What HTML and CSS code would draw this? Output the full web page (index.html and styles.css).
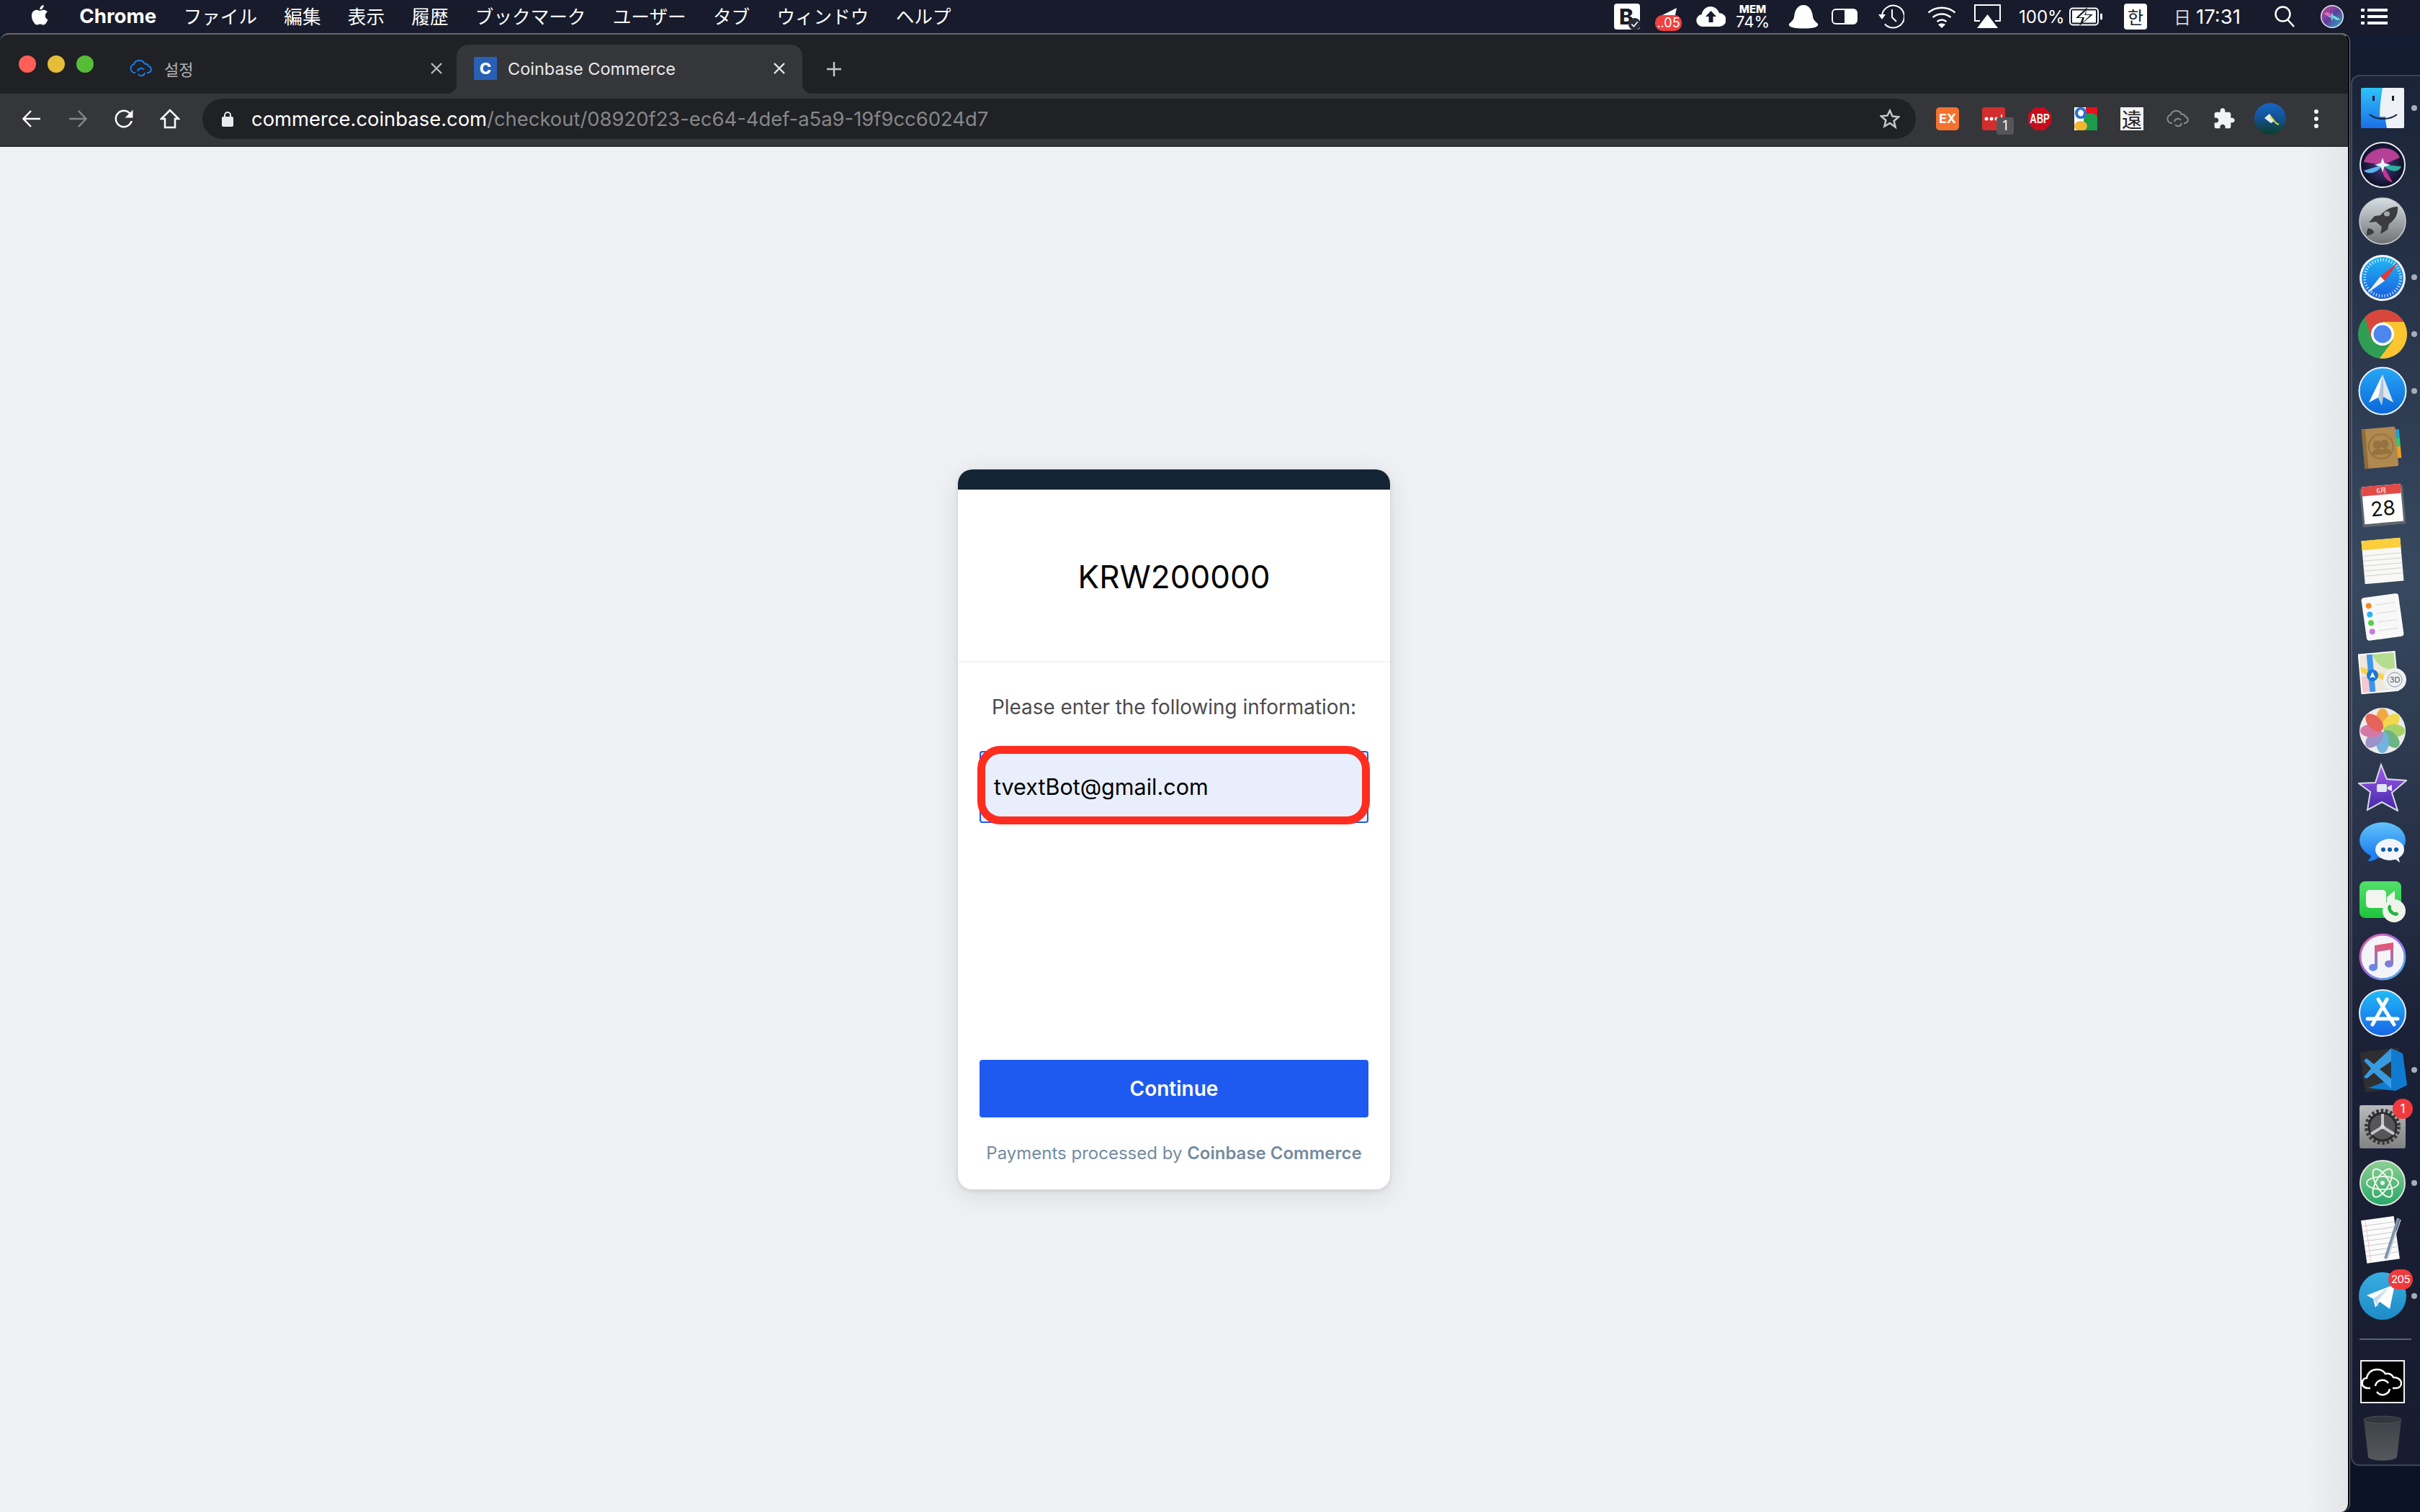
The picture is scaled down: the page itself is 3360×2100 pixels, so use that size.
FILE: index.html
```html
<!DOCTYPE html>
<html lang="en">
<head>
    <meta charset="UTF-8">
    <title>Coinbase Commerce</title>
    <link rel="stylesheet" href="styles.css">
</head>
<body>
    <!-- macOS menu bar -->
    <header class="menubar">
        <nav class="menu">
            <svg class="apple" viewBox="0 0 24 28"><path fill="#fff" d="M17.6 14.8c0-3 2.4-4.400 2.500-4.500-1.400-2-3.500-2.300-4.200-2.300-1.800-.2-3.500 1-4.400 1s-2.300-1-3.800-1c-1.900 0-3.700 1.100-4.700 2.800-2 3.500-.5 8.700 1.500 11.500 1 1.400 2.100 3 3.600 2.900 1.400-.1 2-.9 3.700-.9s2.200.9 3.700.9 2.500-1.400 3.500-2.800c1.100-1.600 1.500-3.200 1.600-3.300-.1 0-3-1.200-3-4.300zM14.700 6.100c.8-1 1.300-2.300 1.200-3.600-1.100 0-2.500.7-3.300 1.700-.7.800-1.300 2.200-1.200 3.500 1.300.1 2.500-.6 3.300-1.600z"/></svg>
            <span class="menu-app">Chrome</span>
            <span>ファイル</span>
            <span>編集</span>
            <span>表示</span>
            <span>履歴</span>
            <span>ブックマーク</span>
            <span>ユーザー</span>
            <span>タブ</span>
            <span>ウィンドウ</span>
            <span>ヘルプ</span>
        </nav>
        <div class="status">
            <div class="st-b"><span>B</span><svg viewBox="0 0 16 16"><circle cx="8" cy="8" r="8" fill="#2a2d38"/><path d="M4 8l3 3 5-6" fill="none" stroke="#fff" stroke-width="1.600"/></svg></div>
            <div class="st-cpu"><svg viewBox="0 0 37 32"><path fill="#fff" d="M6 12L30 0l-3 14z"/></svg><span>..05</span></div>
            <svg class="st-cloud" viewBox="0 0 41 28"><path fill="#fff" d="M9 28a8.500 8.500 0 0 1-1.500-16.900C9 4.600 14 0 20 0c5.500 0 10 3.500 12 9a9.500 9.500 0 0 1 0 19z"/><path fill="#171b2b" d="M20.500 6l7.500 8h-4.500v8h-6v-8H13z"/></svg>
            <div class="st-mem"><b>MEM</b><span>74%</span></div>
            <svg class="st-bell" viewBox="0 0 42 34"><path fill="#fff" d="M21 1c8 0 12 7 13 16 .5 5 4 7 7 10 1 2-1 4-4 5-10 2-22 2-32 0-3-1-5-3-4-5 3-3 6.500-5 7-10C9 8 13 1 21 1z"/></svg>
            <svg class="st-toggle" viewBox="0 0 36 22"><rect x="1" y="1" width="34" height="20" rx="5" fill="none" stroke="#fff" stroke-width="2"/><path fill="#fff" d="M18 1h12a5 5 0 0 1 5 5v10a5 5 0 0 1-5 5H18z"/></svg>
            <svg class="st-time" viewBox="0 0 36 36"><path fill="none" stroke="#fff" stroke-width="2" d="M5 18A15.500 15.500 0 1 1 9 28.500"/><path fill="#fff" d="M0 15h10l-5 7z"/><path fill="none" stroke="#fff" stroke-width="2" d="M19 8v11l6 6"/></svg>
            <svg class="st-wifi" viewBox="0 0 40 32"><g fill="none" stroke="#fff" stroke-width="2.500"><path d="M1.500 10.500C12 1.500 28 1.500 38.500 10.500"/><path d="M7.500 17C15 11 25 11 32.500 17"/><path d="M13.500 23c4-3 9-3 13 0"/></g><path fill="#fff" d="M20 32l-5-5c3-2 7-2 10 0z"/></svg>
            <svg class="st-airplay" viewBox="0 0 37 34"><path fill="none" stroke="#fff" stroke-width="2" d="M8 23H1V1h35v22h-7"/><path fill="#fff" d="M18.500 14L33 33H4z"/></svg>
            <span class="st-pct">100%</span>
            <svg class="st-batt" viewBox="0 0 46 26"><rect x="1" y="1.500" width="39" height="23" rx="4" fill="none" stroke="#fff" stroke-width="2"/><rect x="4" y="4.500" width="33" height="17" fill="#fff"/><path fill="#171b2b" d="M25 0L9 15h9l-4 11 19-16h-10z"/><path fill="#fff" d="M24 4L13 14h8l-2 7 10-10h-8z"/><rect x="43" y="8.500" width="3" height="9" rx="1.500" fill="#fff"/></svg>
            <span class="st-han">한</span>
            <span class="st-day">日</span>
            <span class="st-clock">17:31</span>
            <svg class="st-search" viewBox="0 0 28 30"><circle cx="11.500" cy="11.500" r="10" fill="none" stroke="#fff" stroke-width="2.500"/><path d="M18 19l9 10" stroke="#fff" stroke-width="2.500"/></svg>
            <svg class="st-siri" viewBox="0 0 32 32"><defs><linearGradient id="sg0" x1="0" y1="0" x2="1" y2="1"><stop offset="0" stop-color="#d0489c"/><stop offset=".5" stop-color="#5a3f9c"/><stop offset="1" stop-color="#2fb4c8"/></linearGradient></defs><circle cx="16" cy="16" r="16" fill="#e8e8ee"/><circle cx="16" cy="16" r="14.500" fill="url(#sg0)"/><path fill="#6fd0f0" d="M16 10l1.500 4.500 5 1.500-5 1.500L16 23l-1.500-5.500-5-1.500 5-1.500z"/><path fill="#e06ab8" d="M5 12c4-3 7-3 11 4-5 0-8-1-11-4z"/><path fill="#7ee0c0" d="M27 20c-4 2-7 1-11-4 5 0 8 1 11 4z"/></svg>
            <svg class="st-list" viewBox="0 0 37 24"><g fill="#fff"><rect y="1" width="5" height="4"/><rect y="10" width="5" height="4"/><rect y="19" width="5" height="4"/><rect x="9" y="1" width="28" height="4"/><rect x="9" y="10" width="28" height="4"/><rect x="9" y="19" width="28" height="4"/></g></svg>
        </div>
    </header>

    <div class="desktop">
        <main class="window">
            <div class="tabstrip">
                <div class="lights">
                    <span class="light red"></span>
                    <span class="light yellow"></span>
                    <span class="light green"></span>
                </div>
                <div class="tab">
                    <svg class="favicon" viewBox="0 0 32 24"><g fill="none" stroke="#1a7cf0" stroke-width="2"><path d="M8 18H7a6 6 0 0 1-1-11.800C7 3 10 1 13.500 1c3.200 0 6 1.800 7.200 4.500a5.600 5.600 0 0 1 5.500 3.500A4.600 4.600 0 0 1 26 18h-2"/><path d="M11 16a5 5 0 0 1 9-2M21 18a5 5 0 0 1-9 2"/></g></svg>
                    <span class="tab-title tab-title-ko">설정</span>
                    <svg class="tab-close" viewBox="0 0 16 16"><path d="M1 1l14 14M15 1L1 15" stroke="#b6b8bc" stroke-width="2.400"/></svg>
                </div>
                <div class="tab tab-active">
                    <div class="cb-favicon">C</div>
                    <span class="tab-title">Coinbase Commerce</span>
                    <svg class="tab-close" viewBox="0 0 16 16"><path d="M1 1l14 14M15 1L1 15" stroke="#e8eaed" stroke-width="2.400"/></svg>
                </div>
                <svg class="new-tab" viewBox="0 0 24 24"><path d="M12 2v20M2 12h20" stroke="#c4c7cc" stroke-width="2.500"/></svg>
            </div>

            <div class="toolbar">
                <div class="nav-btn"><svg viewBox="0 0 28 28"><path d="M26 14H3M13 3L2.500 14 13 25" fill="none" stroke="#fff" stroke-width="2.500"/></svg></div>
                <div class="nav-btn"><svg viewBox="0 0 28 28"><path d="M2 14h23M15 3l10.500 11L15 25" fill="none" stroke="#85878a" stroke-width="2.500"/></svg></div>
                <div class="nav-btn"><svg viewBox="3 3 18 18"><path fill="#fff" d="M17.650 6.350C16.200 4.900 14.210 4 12 4c-4.420 0-7.990 3.580-7.990 8s3.570 8 7.990 8c3.730 0 6.840-2.550 7.730-6h-1.680c-.82 2.330-3.040 4.400-6.050 4.400-3.510 0-6.400-2.890-6.400-6.400s2.890-6.400 6.400-6.400c1.760 0 3.340.69 4.520 1.880L13 11h7V4l-2.350 2.350z"/></svg></div>
                <div class="nav-btn"><svg viewBox="0 0 28 28"><path d="M14 2L2 14h5v12h14V14h5z" fill="none" stroke="#fff" stroke-width="2.500"/></svg></div>
                <div class="address">
                    <svg class="lock" viewBox="0 0 16 22"><path d="M4 9V6a4 4 0 0 1 8 0v3" fill="none" stroke="#e8eaed" stroke-width="2"/><rect y="8" width="16" height="14" rx="2" fill="#e8eaed"/></svg>
                    <span class="url"><span class="url-host">commerce.coinbase.com</span>/checkout/08920f23-ec64-4def-a5a9-19f9cc6024d7</span>
                    <svg class="star" viewBox="0 0 28 28"><path d="M14 2.500l3.500 8 8.700.8-6.600 5.700 2 8.500L14 20l-7.600 4.500 2-8.500-6.600-5.700 8.700-.8z" fill="none" stroke="#c4c7cc" stroke-width="2.500"/></svg>
                </div>
                <div class="exts">
                    <div class="ext"><div class="ext-ex">EX</div></div>
                    <div class="ext">
                        <svg class="ext-img" viewBox="0 0 32 32"><rect width="32" height="32" rx="3" fill="#d32d2d"/><g fill="#fff"><circle cx="6" cy="16" r="2.500"/><circle cx="13" cy="16" r="2.500"/><circle cx="20" cy="16" r="2.500"/><rect x="26" y="10" width="2" height="12"/></g></svg>
                        <span class="ext-badge">1</span>
                    </div>
                    <div class="ext">
                        <div class="ext-abp"><span>ABP</span></div>
                    </div>
                    <div class="ext">
                        <svg class="ext-img" viewBox="0 0 32 32"><rect width="32" height="32" fill="#fff"/><path fill="#e8101c" d="M16 0h16v14H16z"/><path fill="#1d9a4c" d="M32 32H13V17c0-6 5-9 10-9 4 0 7 2 9 5z"/><ellipse cx="9" cy="8" rx="7.500" ry="8" fill="#fff"/><path fill="#2a6fd6" d="M9 0c5 0 8 3.500 8 8s-3 8-8 8-8-3.500-8-8 3-8 8-8zm0 3.500C7 3.500 5 5.500 5 8s2 4.500 4 4.500 4-2 4-4.500-2-4.500-4-4.500z"/><ellipse cx="9" cy="26" rx="9" ry="7" fill="#f2b731"/></svg>
                    </div>
                    <div class="ext"><div class="ext-kanji">遠</div></div>
                    <div class="ext">
                        <svg class="ext-img" viewBox="0 0 32 24"><g fill="none" stroke="#8a8c90" stroke-width="2"><path d="M8 18H7a6 6 0 0 1-1-11.800C7 3 10 1 13.500 1c3.200 0 6 1.800 7.200 4.500a5.600 5.600 0 0 1 5.500 3.500A4.600 4.600 0 0 1 26 18h-2"/><path d="M11 16a5 5 0 0 1 9-2M21 18a5 5 0 0 1-9 2"/></g></svg>
                    </div>
                    <div class="ext">
                        <svg class="ext-puzzle" viewBox="0 0 24 24"><path fill="#f1f3f4" d="M20.500 11H19V7c0-1.100-.9-2-2-2h-4V3.500C13 2.120 11.880 1 10.500 1S8 2.120 8 3.500V5H4c-1.100 0-1.990.9-1.990 2v3.800H3.500c1.490 0 2.700 1.210 2.700 2.700s-1.210 2.700-2.700 2.700H2V20c0 1.100.9 2 2 2h3.800v-1.500c0-1.490 1.210-2.700 2.700-2.700 1.490 0 2.700 1.210 2.700 2.700V22H17c1.100 0 2-.9 2-2v-4h1.500c1.380 0 2.500-1.120 2.500-2.500S21.880 11 20.500 11z"/></svg>
                    </div>
                    <div class="ext">
                        <svg class="ext-avatar" viewBox="0 0 44 44"><defs><linearGradient id="av" x1="0" y1="0" x2="0" y2="1"><stop offset="0" stop-color="#1566c8"/><stop offset=".5" stop-color="#13508f"/><stop offset="1" stop-color="#0c3d24"/></linearGradient></defs><circle cx="22" cy="22" r="22" fill="url(#av)"/><path fill="#e6ecf2" d="M14 21l7-6 7 10-5 3z"/><path d="M22 18l8 10 4 2" stroke="#e4d92a" stroke-width="2" fill="none"/></svg>
                    </div>
                    <div class="ext">
                        <div class="ext-menu"><i></i><i></i><i></i></div>
                    </div>
                </div>
            </div>

            <div class="page">
                <section class="card">
                    <div class="card-top"></div>
                    <div class="card-head"><span>KRW200000</span></div>
                    <div class="card-body">
                        <p class="prompt">Please enter the following information:</p>
                        <div class="input">
                            <span>tvextBot@gmail.com</span>
                            <div class="mark"></div>
                        </div>
                        <button class="continue">Continue</button>
                        <p class="processed">Payments processed by <b>Coinbase Commerce</b></p>
                    </div>
                </section>
            </div>
        </main>

        <aside class="dock">
            <!-- finder -->
            <div class="dock-item run">
                <svg viewBox="0 0 68 68"><defs><linearGradient id="fi1" x1="0" y1="0" x2="0" y2="1"><stop offset="0" stop-color="#2ec4fa"/><stop offset="1" stop-color="#1b6fe8"/></linearGradient></defs><rect x="4" y="6" width="60" height="56" rx="2" fill="url(#fi1)"/><path fill="#eef2f6" d="M34 6h28a2 2 0 0 1 2 2v52a2 2 0 0 1-2 2H40c-1-5-2-10-2-16h-8c0-14 2-28 4-40z"/><g fill="#142036"><rect x="20" y="17" width="3" height="7"/><rect x="47" y="17" width="3" height="7"/></g><path d="M16 43c10 8 28 8 38 0" fill="none" stroke="#142036" stroke-width="2"/></svg>
            </div>
            <!-- siri -->
            <div class="dock-item">
                <svg viewBox="0 0 68 68"><defs><radialGradient id="si1"><stop offset="0" stop-color="#4a3a86"/><stop offset="1" stop-color="#0c0f24"/></radialGradient></defs><circle cx="34" cy="34" r="31" fill="url(#si1)" stroke="#e8e8ee" stroke-width="2"/><path fill="#c4449c" opacity=".9" d="M8 30C14 8 50 4 58 24L34 34z"/><path fill="#2fc8a8" opacity=".85" d="M34 34l26 2c-4 10-16 8-26-2z"/><path fill="#d03a94" opacity=".9" d="M34 34l14 24c-9-1-17-12-14-24z"/><path fill="#5ec4ff" opacity=".9" d="M34 34L8 42c6 6 19 4 26-8z"/><path fill="#e8f8ff" d="M34 24l2.500 7.500 8.500 2.500-8.500 2.500L34 44l-2.500-7.500L23 34l8.500-2.500z"/></svg>
            </div>
            <!-- launchpad -->
            <div class="dock-item">
                <svg viewBox="0 0 68 68"><defs><linearGradient id="lp1" x1="0" y1="0" x2="0" y2="1"><stop offset="0" stop-color="#d7dfe4"/><stop offset="1" stop-color="#6f7073"/></linearGradient></defs><circle cx="34" cy="34" r="32" fill="url(#lp1)" stroke="#c8ccd0" stroke-width="1.500"/><path fill="#3c3c3f" d="M55 14c1 9-3 18-12 24l-2 8-10 6 2-10-8-7-10 1 8-9 8-1c7-8 15-12 24-12z"/><path fill="#3c3c3f" d="M14 44c4 0 8 3 8 6-3 3-8 4-10 4 0-3 0-7 2-10z"/><ellipse cx="40" cy="24" rx="4" ry="3.500" fill="#a4a8ac"/></svg>
            </div>
            <!-- safari -->
            <div class="dock-item run">
                <svg viewBox="0 0 68 68"><defs><linearGradient id="sa1" x1="0" y1="0" x2="0" y2="1"><stop offset="0" stop-color="#1fb8f4"/><stop offset="1" stop-color="#1a5ee0"/></linearGradient></defs><circle cx="34" cy="34" r="32" fill="#f3f4f6"/><circle cx="34" cy="34" r="29" fill="url(#sa1)"/><circle cx="34" cy="34" r="25" fill="none" stroke="#fff" stroke-width="4" stroke-dasharray="1 2.930"/><path fill="#f0342c" d="M56 12L37 38l-6-6z"/><path fill="#f0f0f0" d="M12 56l19-24 6 6z"/></svg>
            </div>
            <!-- chrome -->
            <div class="dock-item run">
                <svg viewBox="0 0 68 68"><circle cx="34" cy="34" r="34" fill="#2f9e54"/><path fill="#d9473c" d="M9.600 10.300A34 34 0 0 1 63.400 17H34L19.300 42.500z"/><path fill="#fbc52f" d="M34 17h29.400A34 34 0 0 1 30 67.800L48.700 42.500z"/><circle cx="34" cy="34" r="16" fill="#fff"/><circle cx="34" cy="34" r="12.500" fill="#4d86ee"/></svg>
            </div>
            <!-- spark -->
            <div class="dock-item run">
                <svg viewBox="0 0 68 68"><defs><linearGradient id="sp1" x1="0" y1="0" x2="0" y2="1"><stop offset="0" stop-color="#27a8f8"/><stop offset="1" stop-color="#0a66d8"/></linearGradient></defs><circle cx="34" cy="34" r="32.500" fill="url(#sp1)" stroke="#eef3f8" stroke-width="2"/><path fill="#dbe6f2" d="M34 11L49 50l-14-8z"/><path fill="#fff" d="M34 11L15 50l13-7 5 11z"/><path fill="#b6c6d8" d="M34 11l1 31-2 12-5-11z"/></svg>
            </div>
            <!-- contacts -->
            <div class="dock-item">
                <svg viewBox="0 0 68 68"><g transform="rotate(-5 34 34)"><path fill="#22a0ce" d="M53 10h6v12h-6z"/><path fill="#2cc87c" d="M53 22h6v12h-6z"/><path fill="#f0a020" d="M53 34h6v16h-6z"/><path fill="#b08850" d="M7 6h44a3 3 0 0 1 3 3v50a2 2 0 0 1-2 2H7z"/><rect x="7" y="6" width="5" height="55" fill="#8e6c3c"/><circle cx="32" cy="32" r="17" fill="none" stroke="#957340" stroke-width="2"/><circle cx="27" cy="29" r="6" fill="#957340"/><circle cx="37" cy="29" r="6" fill="#957340"/><path fill="#957340" d="M17 43c2-6 6-8 10-8s8 2 10 8zM29 43c2-6 5-8 9-8s7 2 8 8z"/></g></svg>
            </div>
            <!-- calendar -->
            <div class="dock-item">
                <svg viewBox="0 0 68 68"><g transform="rotate(-5 34 34)"><rect x="4" y="10" width="60" height="54" fill="#5e666e"/><rect x="7" y="8" width="54" height="52" fill="#fff"/><rect x="7" y="8" width="54" height="13" fill="#e34a46"/><text x="34" y="18.500" class="cal-month">6月</text><text x="34" y="50" class="cal-day">28</text></g></svg>
            </div>
            <!-- notes -->
            <div class="dock-item">
                <svg viewBox="0 0 68 68"><g transform="rotate(-5 34 34)"><rect x="7" y="4" width="54" height="60" fill="#f8f8f6"/><rect x="7" y="4" width="54" height="13" fill="#fbcf3c"/><path stroke="#d0d0cc" stroke-width="1" d="M7 25h54M7 32h54M7 39h54M7 46h54M7 53h54"/></g></svg>
            </div>
            <!-- reminders -->
            <div class="dock-item">
                <svg viewBox="0 0 68 68"><g transform="rotate(-8 34 34)"><rect x="8" y="4" width="52" height="60" rx="4" fill="#f8f8f8"/><circle cx="17" cy="16" r="4" fill="#f58a2a"/><circle cx="17" cy="28" r="4" fill="#2fb0f5"/><circle cx="17" cy="40" r="4" fill="#54d044"/><circle cx="17" cy="52" r="4" fill="#c87ae0"/><path stroke="#d8d8d8" d="M26 16h28M26 28h28M26 40h28M26 52h28"/></g></svg>
            </div>
            <!-- maps -->
            <div class="dock-item">
                <svg viewBox="0 0 68 68"><g transform="rotate(-5 30 32)"><rect x="2" y="4" width="52" height="56" fill="#fff"/><rect x="4" y="6" width="48" height="52" fill="#ece8dc"/><path fill="#b6dc90" d="M22 6h30v24c-12 0-26-8-30-24z"/><path fill="#f6c8d4" d="M4 36h10v22H4z"/><path fill="#fbd24e" d="M4 22l48 20v8L4 30z"/><path fill="#3d96ea" d="M14 6h8v52h-8z"/></g><circle cx="20" cy="36" r="8" fill="#1777d8"/><path fill="#fff" d="M20 31l4 9-4-2-4 2z"/><circle cx="51" cy="42" r="16" fill="#eef0f2"/><circle cx="51" cy="42" r="10" fill="none" stroke="#8a96a4"/><text x="51" y="46" class="maps-3d">3D</text></svg>
            </div>
            <!-- photos -->
            <div class="dock-item">
                <svg viewBox="0 0 68 68"><circle cx="34" cy="34" r="32" fill="#ecebea"/><g opacity=".82"><ellipse cx="34" cy="18" rx="9" ry="15" fill="#f59a22"/><ellipse cx="34" cy="18" rx="9" ry="15" fill="#f4d52a" transform="rotate(45 34 34)"/><ellipse cx="34" cy="18" rx="9" ry="15" fill="#96cc4a" transform="rotate(90 34 34)"/><ellipse cx="34" cy="18" rx="9" ry="15" fill="#4fa86e" transform="rotate(135 34 34)"/><ellipse cx="34" cy="18" rx="9" ry="15" fill="#5aa7dc" transform="rotate(180 34 34)"/><ellipse cx="34" cy="18" rx="9" ry="15" fill="#8c7fc0" transform="rotate(225 34 34)"/><ellipse cx="34" cy="18" rx="9" ry="15" fill="#cf5f94" transform="rotate(270 34 34)"/><ellipse cx="34" cy="18" rx="9" ry="15" fill="#e4463c" transform="rotate(315 34 34)"/></g><circle cx="34" cy="34" r="1.500" fill="#fff"/></svg>
            </div>
            <!-- imovie -->
            <div class="dock-item">
                <svg viewBox="0 0 68 68"><defs><linearGradient id="im1" x1="0" y1="0" x2="0" y2="1"><stop offset="0" stop-color="#a45cf2"/><stop offset="1" stop-color="#4226a8"/></linearGradient></defs><path fill="url(#im1)" stroke="#d8dce2" stroke-width="2" d="M32 3l8 20 27 2-20 17 8 25-22-12-20 11 4-25L1 29l23-1z"/><rect x="26" y="30" width="14" height="11" rx="2" fill="#dfe6f4"/><path fill="#dfe6f4" d="M41 34l6-3v9l-6-3z"/></svg>
            </div>
            <!-- messages -->
            <div class="dock-item">
                <svg viewBox="0 0 68 68"><defs><linearGradient id="ms1" x1="0" y1="0" x2="0" y2="1"><stop offset="0" stop-color="#62c3fb"/><stop offset="1" stop-color="#1878ef"/></linearGradient></defs><ellipse cx="34" cy="29" rx="32" ry="25" fill="url(#ms1)"/><path fill="#1f80f0" d="M18 48c0 5-2 8-5 10 6 0 12-2 16-6z"/><ellipse cx="44" cy="42" rx="20" ry="15" fill="#f2f6fb"/><path fill="#f2f6fb" d="M50 54l8 6-2-8z"/><g fill="#0f5aa8"><circle cx="35" cy="42" r="3"/><circle cx="44" cy="42" r="3"/><circle cx="53" cy="42" r="3"/></g></svg>
            </div>
            <!-- facetime -->
            <div class="dock-item">
                <svg viewBox="0 0 68 68"><defs><linearGradient id="ft1" x1="0" y1="0" x2="0" y2="1"><stop offset="0" stop-color="#52e06a"/><stop offset="1" stop-color="#1ec53e"/></linearGradient></defs><rect x="2" y="8" width="58" height="51" rx="8" fill="url(#ft1)"/><rect x="11" y="20" width="28" height="25" rx="5" fill="#f2f4ef"/><path fill="#f2f4ef" d="M40 30l11-9v22l-11-7z"/><ellipse cx="50" cy="49" rx="16" ry="16" fill="#eef4ea"/><path fill="#22b540" d="M43 41c2-1 4 3 3 4-1 2 4 7 6 6 1-1 5 1 4 3-2 3-6 2-9 0-5-3-8-10-4-13z"/></svg>
            </div>
            <!-- music -->
            <div class="dock-item">
                <svg viewBox="0 0 68 68"><defs><linearGradient id="mu1" x1="0" y1="0" x2="1" y2="1"><stop offset="0" stop-color="#e85f90"/><stop offset=".5" stop-color="#9c6ae4"/><stop offset="1" stop-color="#38c4f0"/></linearGradient><linearGradient id="mu2" x1="0" y1="0" x2="0" y2="1"><stop offset="0" stop-color="#f2506a"/><stop offset="1" stop-color="#5a90f4"/></linearGradient></defs><circle cx="34" cy="34" r="31" fill="#f4f4f8" stroke="url(#mu1)" stroke-width="3"/><path fill="url(#mu2)" d="M23 18l26-4v30a6 5 0 1 1-4-5V24l-18 3v22a6 5 0 1 1-4-5z"/></svg>
            </div>
            <!-- app store -->
            <div class="dock-item">
                <svg viewBox="0 0 68 68"><defs><linearGradient id="as1" x1="0" y1="0" x2="0" y2="1"><stop offset="0" stop-color="#20bcf8"/><stop offset="1" stop-color="#1864e8"/></linearGradient></defs><circle cx="34" cy="34" r="32" fill="url(#as1)" stroke="#eef0f4" stroke-width="2"/><path stroke="#fff" stroke-width="5" stroke-linecap="round" fill="none" d="M40 15L20 50M28 15l22 35M13 42h42"/></svg>
            </div>
            <!-- vscode -->
            <div class="dock-item run">
                <svg viewBox="0 0 68 68"><path fill="#2f2f31" transform="rotate(-7 34 34)" d="M6 6h54v56H6z"/><path fill="#0f7bd0" d="M46 4l16 7 6 44-16 8-38-4 32-12z"/><path fill="#3aa0ea" d="M46 4l-24 22-10-8-4 3 10 11-10 12 4 2 10-8 24 22z" opacity=".95"/><path fill="#2f2f31" d="M46 22L30 33l16 13z"/></svg>
            </div>
            <!-- system preferences -->
            <div class="dock-item">
                <svg viewBox="0 0 68 68"><defs><linearGradient id="pr1" x1="0" y1="0" x2="0" y2="1"><stop offset="0" stop-color="#b8babc"/><stop offset="1" stop-color="#808284"/></linearGradient></defs><rect x="2" y="4" width="64" height="60" rx="3" fill="url(#pr1)"/><circle cx="34" cy="34" r="21" fill="none" stroke="#3c3c3e" stroke-width="8" stroke-dasharray="3.500 2.500"/><circle cx="34" cy="34" r="19" fill="#565658" stroke="#2b2b2d" stroke-width="3"/><path stroke="#c4c4c6" stroke-width="4" d="M34 34V16M34 34L18 44M34 34l16 10"/><circle cx="34" cy="34" r="3" fill="#dcdcde"/></svg>
                <span class="dock-badge dock-badge-one">1</span>
            </div>
            <!-- atom -->
            <div class="dock-item run">
                <svg viewBox="0 0 68 68"><defs><linearGradient id="at1" x1="0" y1="0" x2="0" y2="1"><stop offset="0" stop-color="#8fcf93"/><stop offset="1" stop-color="#27a868"/></linearGradient></defs><circle cx="34" cy="34" r="31" fill="url(#at1)" stroke="#dfe4dc" stroke-width="2"/><g fill="none" stroke="#eef6ea" stroke-width="2"><ellipse cx="34" cy="34" rx="22" ry="9"/><ellipse cx="34" cy="34" rx="22" ry="9" transform="rotate(60 34 34)"/><ellipse cx="34" cy="34" rx="22" ry="9" transform="rotate(120 34 34)"/></g><circle cx="34" cy="34" r="3" fill="#eef6ea"/></svg>
            </div>
            <!-- textedit -->
            <div class="dock-item">
                <svg viewBox="0 0 68 68"><g transform="rotate(-8 30 34)"><rect x="8" y="4" width="46" height="60" fill="#fbfbfb"/><path stroke="#c8c8cc" d="M8 12h46M8 19h46M8 26h46M8 33h46M8 40h46M8 47h46M8 54h46"/><path stroke="#f4c4c4" d="M14 4v60"/></g><path stroke="#7f93ab" stroke-width="4" d="M38 60l18-56"/><path stroke="#c8d4e0" stroke-width="1.500" d="M41 60l18-54"/></svg>
            </div>
            <!-- telegram -->
            <div class="dock-item run">
                <svg viewBox="0 0 68 68"><defs><linearGradient id="tg1" x1="0" y1="0" x2="0" y2="1"><stop offset="0" stop-color="#37aee2"/><stop offset="1" stop-color="#1e8bc6"/></linearGradient></defs><circle cx="34" cy="34" r="33" fill="url(#tg1)"/><path fill="#fff" d="M12 33l39-15-7 34-14-10-6 8-3-12z"/><path fill="#c8dcec" d="M21 38l23-17-17 20 1 8z"/></svg>
                <span class="dock-badge dock-badge-num">205</span>
            </div>
            <div class="dock-sep"><hr></div>
            <!-- cloud sync -->
            <div class="dock-item">
                <svg viewBox="0 0 68 68"><rect x="4" y="5" width="60" height="58" fill="#000" stroke="#f4f4f4" stroke-width="2"/><path fill="none" stroke="#fff" stroke-width="2.500" d="M17 43h-3c-7 0-9-5-8-8 0-4 3-6 6-6 1-7 7-12 14-12 6 0 10 3 12 6 5-1 9 1 11 5 7 0 11 4 11 8 0 4-3 7-8 7h-4"/><path fill="none" stroke="#fff" stroke-width="2.500" d="M24 40a10 10 0 0 1 18-4M44 44a10 10 0 0 1-18 4"/></svg>
            </div>
            <!-- trash -->
            <div class="dock-item">
                <svg viewBox="0 0 68 68"><defs><linearGradient id="tr1" x1="0" y1="0" x2="0" y2="1"><stop offset="0" stop-color="#3d4248"/><stop offset="1" stop-color="#54585c"/></linearGradient></defs><path fill="url(#tr1)" d="M8 8h52l-6 52c-5 6-35 6-40 0z"/><ellipse cx="34" cy="8" rx="26" ry="5" fill="#33373b" stroke="#4e5257"/></svg>
            </div>
        </aside>
    </div>
</body>
</html>
```
FILE: styles.css
```css
* {
    box-sizing: border-box;
    margin: 0;
    padding: 0;
}

html, body {
    width: 3360px;
    height: 2100px;
    overflow: hidden;
}

body {
    font-family: Inter, 'Liberation Sans', sans-serif;
    background: linear-gradient(180deg, #131b30 0%, #101a33 60%, #0b1226 100%);
    color: #fff;
}

/* menu bar */
.menubar {
    height: 46px;
    background: #171b2b;
    display: flex;
    justify-content: space-between;
    align-items: center;
    padding-right: 45px;
}

.menu {
    display: flex;
    align-items: center;
    gap: 37.300px;
    padding: 0 0 2px 41px;
    font-family: 'Noto Sans CJK JP', sans-serif;
    font-size: 25.600px;
    line-height: 44px;
}

.apple {
    width: 30px;
    height: 34px;
    margin: -2px 2px 0 0;
}

.menu-app {
    font-family: Inter, sans-serif;
    font-weight: 700;
    font-size: 27.700px;
}

.status {
    display: flex;
    align-items: center;
    font-size: 24px;
    height: 46px;
}

.st-b {
    width: 36px;
    height: 36px;
    background: #fff;
    border-radius: 4px;
    position: relative;
    color: #171b2b;
    font-weight: 800;
    font-size: 30px;
    line-height: 36px;
    padding-left: 7px;
}

.st-b svg {
    position: absolute;
    right: -1px;
    bottom: -1px;
    width: 17px;
    height: 17px;
}

.st-cpu {
    width: 37px;
    height: 32px;
    margin-left: 21px;
    margin-top: 8px;
    position: relative;
}

.st-cpu svg {
    display: block;
    width: 37px;
    height: 32px;
}

.st-cpu span {
    position: absolute;
    left: 0;
    bottom: 0;
    width: 37px;
    height: 22px;
    background: #f04040;
    border-radius: 10px;
    font-size: 18px;
    line-height: 22px;
    text-align: center;
}

.st-cloud {
    width: 41px;
    height: 28px;
    margin-left: 20px;
}

.st-mem {
    width: 49px;
    margin-left: 13px;
    display: flex;
    flex-direction: column;
    align-items: center;
}

.st-mem b {
    font-size: 15px;
    line-height: 14px;
    font-weight: 800;
}

.st-mem span {
    font-size: 22px;
    line-height: 20px;
}

.st-bell {
    width: 42px;
    height: 34px;
    margin-left: 25px;
}

.st-toggle {
    width: 36px;
    height: 22px;
    margin-left: 18px;
}

.st-time {
    width: 36px;
    height: 36px;
    margin-left: 29px;
}

.st-wifi {
    width: 40px;
    height: 32px;
    margin-left: 32px;
}

.st-airplay {
    width: 37px;
    height: 34px;
    margin-left: 25px;
}

.st-pct {
    width: 60px;
    margin-left: 25px;
    white-space: nowrap;
    font-size: 24px;
}

.st-batt {
    width: 46px;
    height: 26px;
    margin-left: 10px;
}

.st-han {
    width: 32px;
    height: 36px;
    margin-left: 30px;
    background: #fff;
    border-radius: 4px;
    color: #171b2b;
    font-family: 'Noto Sans CJK KR', sans-serif;
    font-size: 24px;
    line-height: 36px;
    text-align: center;
}

.st-day {
    width: 20px;
    margin-left: 37px;
    font-family: 'Noto Sans CJK JP', sans-serif;
    font-size: 24px;
    line-height: 36px;
    color: #d8d8d8;
}

.st-clock {
    width: 63px;
    margin-left: 11px;
    font-size: 27.500px;
    white-space: nowrap;
}

.st-search {
    width: 28px;
    height: 30px;
    margin-left: 46px;
}

.st-siri {
    width: 32px;
    height: 32px;
    margin-left: 36px;
}

.st-list {
    width: 37px;
    height: 24px;
    margin-left: 24px;
}

/* desktop */
.desktop {
    display: flex;
    height: 2054px;
}

.window {
    width: 3262px;
    height: 2054px;
    display: flex;
    flex-direction: column;
    flex-shrink: 0;
    background: #202124;
    border-top: 2px solid #66686c;
    border-right: 2px solid #000;
    border-radius: 12px 12px 12px 0;
    box-shadow: 1px 0 0 #7c8088;
    overflow: hidden;
}

.tabstrip {
    height: 82px;
    display: flex;
    align-items: flex-end;
    flex-shrink: 0;
}

.lights {
    width: 164px;
    height: 82px;
    padding: 29px 0 0 26px;
    display: flex;
    gap: 16px;
}

.light {
    width: 24px;
    height: 24px;
    border-radius: 50%;
}

.red { background: #ff5f57; }
.yellow { background: #e5bd39; }
.green { background: #57bd39; }

.tab {
    width: 458px;
    height: 68px;
    display: flex;
    align-items: center;
    padding: 0 8px 2px 16px;
    position: relative;
}

.tab-active {
    width: 480px;
    margin-left: 12px;
    padding: 0 24px 2px 24px;
    background: #35363a;
    border-radius: 16px 16px 0 0;
}

.tab-active::before,
.tab-active::after {
    content: '';
    position: absolute;
    bottom: 0;
    width: 14px;
    height: 14px;
}

.tab-active::before {
    left: -14px;
    background: radial-gradient(circle at 0 0, transparent 14px, #35363a 14.500px);
}

.tab-active::after {
    right: -14px;
    background: radial-gradient(circle at 100% 0, transparent 14px, #35363a 14.500px);
}

.favicon {
    width: 32px;
    height: 24px;
}

.cb-favicon {
    width: 32px;
    height: 32px;
    background: #2760b4;
    color: #fff;
    font-weight: 800;
    font-size: 22px;
    line-height: 32px;
    text-align: center;
}

.tab-title {
    flex: 1;
    margin-left: 15px;
    font-size: 23.500px;
    color: #e8eaed;
    white-space: nowrap;
}

.tab-title-ko {
    margin-left: 16px;
    font-family: 'Noto Sans CJK KR', sans-serif;
    font-size: 22px;
    color: #b0b3b8;
}

.tab-close {
    width: 16px;
    height: 16px;
}

.new-tab {
    width: 24px;
    height: 24px;
    margin: 0 0 22px 32px;
}

.toolbar {
    height: 74px;
    background: #35363a;
    display: flex;
    align-items: center;
    flex-shrink: 0;
    padding: 0 0 2px 24px;
    border-bottom: 2px solid #2b2c2f;
}

.nav-btn {
    width: 40px;
    height: 40px;
    margin-right: 24px;
    display: flex;
    align-items: center;
    justify-content: center;
}

.nav-btn svg {
    width: 28px;
    height: 28px;
}

.address {
    width: 2379px;
    height: 56px;
    margin-left: 1px;
    background: #202124;
    border-radius: 28px;
    display: flex;
    align-items: center;
    padding: 0 22px 0 27px;
    flex-shrink: 0;
}

.lock {
    width: 16px;
    height: 22px;
}

.url {
    flex: 1;
    margin-left: 25px;
    font-size: 27.400px;
    color: #85878a;
    white-space: nowrap;
}

.url-host {
    color: #fff;
}

.star {
    width: 28px;
    height: 28px;
}

.exts {
    display: flex;
    margin-left: 12px;
}

.ext {
    width: 64px;
    height: 56px;
    display: flex;
    align-items: center;
    justify-content: center;
    position: relative;
}

.ext-img {
    width: 32px;
    height: 32px;
}

.ext-ex {
    width: 32px;
    height: 32px;
    background: #f37230;
    border-radius: 5px;
    font-size: 18px;
    font-weight: 700;
    line-height: 32px;
    text-align: center;
}

.ext-badge {
    position: absolute;
    left: 36px;
    top: 26px;
    width: 24px;
    height: 24px;
    background: #555659;
    border-radius: 3px;
    font-size: 18px;
    line-height: 24px;
    text-align: center;
}

.ext-abp {
    width: 32px;
    height: 32px;
    background: #c70d1c;
    clip-path: polygon(30% 0, 70% 0, 100% 30%, 100% 70%, 70% 100%, 30% 100%, 0 70%, 0 30%);
    font-family: 'Liberation Sans', sans-serif;
    font-size: 18px;
    font-weight: 700;
    line-height: 32px;
    display: flex;
    justify-content: center;
}

.ext-abp span {
    display: block;
    transform: scaleX(0.72);
}

.ext-kanji {
    width: 32px;
    height: 32px;
    background: #f4f4f2;
    color: #222;
    font-family: 'Noto Sans CJK JP', sans-serif;
    font-size: 28px;
    line-height: 32px;
    text-align: center;
}

.ext-puzzle {
    width: 32px;
    height: 32px;
}

.ext-avatar {
    width: 44px;
    height: 44px;
}

.ext-menu {
    display: flex;
    flex-direction: column;
    gap: 4px;
}

.ext-menu i {
    width: 6px;
    height: 6px;
    border-radius: 50%;
    background: #f1f3f4;
}

/* page */
.page {
    flex: 1;
    background: linear-gradient(90deg, #eff1f5 calc(100% - 60px), #e3e5e8 100%);
    display: flex;
    align-items: center;
    justify-content: center;
    color: #000;
}

.card {
    width: 600px;
    height: 1000px;
    background: #fff;
    border-radius: 20px;
    box-shadow: 0 8px 40px rgba(0, 0, 0, 0.1), 0 2px 6px rgba(0, 0, 0, 0.1);
    display: flex;
    flex-direction: column;
    overflow: hidden;
}

.card-top {
    height: 28px;
    background: #152535;
}

.card-head {
    height: 240px;
    padding-top: 3px;
    border-bottom: 2px solid #f3f4f5;
    display: flex;
    align-items: center;
    justify-content: center;
    font-size: 44px;
    font-weight: 400;
}

.card-body {
    flex: 1;
    display: flex;
    flex-direction: column;
    padding: 0 30px;
}

.prompt {
    margin-top: 43px;
    text-align: center;
    font-size: 27.900px;
    line-height: 38px;
    font-weight: 400;
    color: #4c4c4e;
    white-space: nowrap;
}

.input {
    height: 100px;
    margin-top: 42px;
    background: #e8eefb;
    border: 2px solid #1f5af0;
    border-radius: 4px;
    display: flex;
    align-items: center;
    padding: 0 18px;
    font-size: 30.500px;
    position: relative;
}

.input span {
    position: relative;
    top: -1px;
}

/* red annotation drawn over the field */
.mark {
    position: absolute;
    top: -9px;
    bottom: -4px;
    left: -5px;
    right: -4px;
    border: 11px solid #ff2d1f;
    border-radius: 32px;
}

.continue {
    height: 80px;
    margin-top: auto;
    background: #1f5af0;
    border: none;
    border-radius: 4px;
    color: #fff;
    font-family: inherit;
    font-size: 28px;
    font-weight: 600;
}

.processed {
    height: 100px;
    padding-top: 34px;
    text-align: center;
    font-size: 24px;
    line-height: 32px;
    color: #748b9f;
    white-space: nowrap;
}

.processed b {
    font-weight: 600;
}

/* dock */
.dock {
    width: 100px;
    height: 1932px;
    margin: 58px 0 0 2px;
    padding-top: 4.700px;
    background: linear-gradient(180deg, #1a2338 0%, #38495f 36%, #1a2036 70%, #171c30 100%);
    border: 2px solid rgba(255, 255, 255, 0.16);
    border-right: none;
    border-radius: 12px 0 0 12px;
    flex-shrink: 0;
}

.dock-item {
    height: 78.600px;
    padding-left: 8px;
    display: flex;
    align-items: center;
    position: relative;
}

.dock-item svg {
    width: 68px;
    height: 68px;
}

.run::after {
    content: '';
    position: absolute;
    left: 82px;
    top: 35px;
    width: 8px;
    height: 8px;
    border-radius: 50%;
    background: #a8aeb8;
}

.dock-sep {
    height: 40.400px;
    padding-left: 10px;
    display: flex;
    align-items: center;
}

.dock-sep hr {
    width: 72px;
    height: 2px;
    border: none;
    background: #5a6275;
}

.dock-badge {
    position: absolute;
    background: #f03a3e;
    border-radius: 14px;
    height: 28px;
    font-size: 17px;
    line-height: 28px;
    text-align: center;
}

.dock-badge-one {
    width: 28px;
    left: 56px;
    top: 1px;
}

.dock-badge-num {
    width: 34px;
    left: 50px;
    top: 2px;
    font-size: 15px;
    letter-spacing: -0.5px;
}

.cal-month {
    font-size: 9px;
    fill: #fff;
    text-anchor: middle;
    font-family: 'Noto Sans CJK JP', sans-serif;
}

.cal-day {
    font-size: 28px;
    fill: #111;
    text-anchor: middle;
}

.maps-3d {
    font-size: 11px;
    fill: #4a5564;
    text-anchor: middle;
}
```
